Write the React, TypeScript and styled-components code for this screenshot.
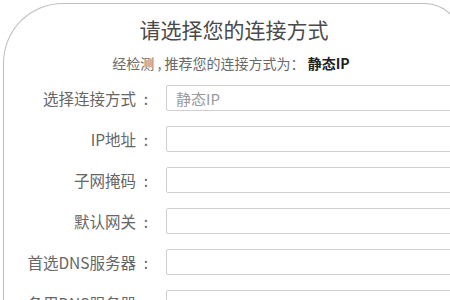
import styled, { createGlobalStyle } from "styled-components";

const GlobalStyle = createGlobalStyle`
  html, body {
    margin: 0;
    padding: 0;
    background: #ffffff;
    overflow: hidden;
  }
  body {
    font-family: "Liberation Sans", "Noto Sans CJK SC", sans-serif;
  }
`;

const StyledPanel = styled.div`
  box-sizing: border-box;
  margin: 3px 0 0 3px;
  width: 458px;
  height: 420px;
  border: 1.5px solid #bdbdbd;
  border-bottom: none;
  border-radius: 60px 36px 0 0;
  padding-top: 12px;
  overflow: hidden;
`;

const StyledTitle = styled.h2`
  margin: 0;
  text-align: center;
  font-family: "Noto Sans CJK SC", sans-serif;
  font-weight: 400;
  font-size: 21px;
  line-height: 26px;
  color: #4a4a4a;
  padding-left: 4px;
`;

const StyledHint = styled.p`
  margin: 12px 0 0;
  text-align: center;
  font-family: "Noto Sans CJK SC", sans-serif;
  font-size: 14px;
  line-height: 18px;
  color: #6a6a6a;
  padding-right: 2px;
  > b {
    color: #222;
    font-weight: 700;
    font-size: 14px;
  }
`;

const StyledForm = styled.form`
  display: flex;
  flex-direction: column;
  gap: 15px;
  margin-top: 13px;
`;

const StyledRow = styled.div`
  display: grid;
  grid-template-columns: 152px 300px;
  column-gap: 10px;
  align-items: center;
`;

const StyledLabel = styled.label`
  display: flex;
  justify-content: flex-end;
  font-family: "Noto Sans CJK SC", sans-serif;
  font-size: 15.5px;
  line-height: 20px;
  color: #666;
  white-space: nowrap;
`;

const StyledColon = styled.span`
  width: 20px;
  text-align: center;
`;

const StyledInput = styled.div<{ $filled?: boolean }>`
  box-sizing: border-box;
  height: 26px;
  border: 1px solid #cfcfcf;
  border-radius: 2px;
  padding: 0 9px;
  display: flex;
  align-items: center;
  font-family: "Noto Sans CJK SC", sans-serif;
  font-size: 15px;
  color: ${(p) => (p.$filled ? "#9a9a9a" : "transparent")};
`;

const fields = [
  { label: "选择连接方式", value: "静态IP" },
  { label: "IP地址", value: "" },
  { label: "子网掩码", value: "" },
  { label: "默认网关", value: "" },
  { label: "首选DNS服务器", value: "" },
  { label: "备用DNS服务器", value: "" },
];

const App = () => {
  return (
    <>
      <GlobalStyle />
      <StyledPanel>
        <StyledTitle>请选择您的连接方式</StyledTitle>
        <StyledHint>
          经检测 , 推荐您的连接方式为： <b>静态IP</b>
        </StyledHint>
        <StyledForm>
          {fields.map((f) => (
            <StyledRow key={f.label}>
              <StyledLabel>
                {f.label}
                <StyledColon>:</StyledColon>
              </StyledLabel>
              <StyledInput $filled={!!f.value}>{f.value}</StyledInput>
            </StyledRow>
          ))}
        </StyledForm>
      </StyledPanel>
    </>
  );
};

export default App;
